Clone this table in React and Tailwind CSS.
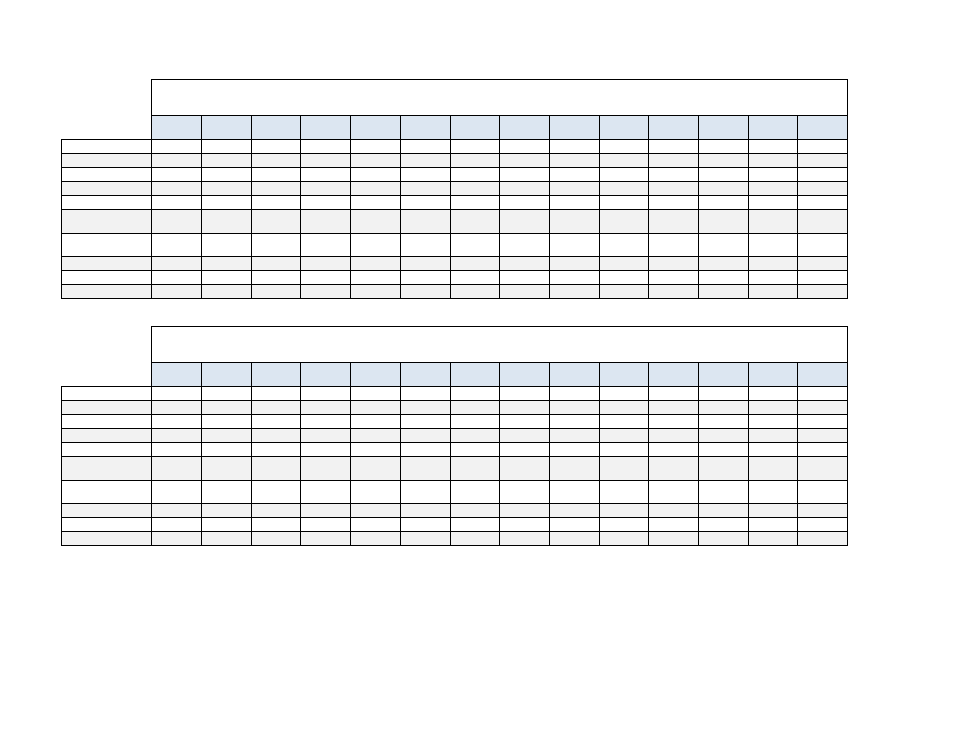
import React from 'react';

// column widths measured line-to-line, the last one also carries the right border
const colWidths = [50, 50, 49, 50, 50, 50, 49, 50, 50, 49, 50, 50, 49, 50];
const rowHeights = [14, 14, 14, 14, 14, 24, 23, 14, 14, 14];

const DataRow = ({ height, shaded, last }) => {
  const bg = shaded ? 'bg-[#f2f2f2]' : 'bg-white';
  return (
    <div className="flex flex-row">
      <div
        className={`w-[90px] shrink-0 border-l border-t border-black ${bg} ${last ? 'border-b' : ''}`}
        style={{ height: height + (last ? 1 : 0) }}
      />
      {colWidths.map((w, i) => (
        <div
          key={i}
          className={`shrink-0 border-l border-t border-black ${bg} ${last ? 'border-b' : ''} ${
            i === colWidths.length - 1 ? 'border-r' : ''
          }`}
          style={{
            width: w + (i === colWidths.length - 1 ? 1 : 0),
            height: height + (last ? 1 : 0),
          }}
        />
      ))}
    </div>
  );
};

const Sheet = () => {
  return (
    <div className="flex flex-col">
      <div className="flex flex-row">
        <div className="w-[90px] shrink-0" />
        <div className="w-[697px] h-[36px] shrink-0 border-l border-t border-r border-black bg-white" />
      </div>
      <div className="flex flex-row">
        <div className="w-[90px] shrink-0" />
        {colWidths.map((w, i) => (
          <div
            key={i}
            className={`h-[24px] shrink-0 border-l border-t border-black bg-[#dce6f1] ${
              i === colWidths.length - 1 ? 'border-r' : ''
            }`}
            style={{ width: w + (i === colWidths.length - 1 ? 1 : 0) }}
          />
        ))}
      </div>
      {rowHeights.map((h, i) => (
        <DataRow key={i} height={h} shaded={i % 2 === 1} last={i === rowHeights.length - 1} />
      ))}
    </div>
  );
};

export default function App() {
  return (
    <div className="w-[954px] h-[738px] bg-white pl-[61px] pt-[79px] flex flex-col gap-[27px] font-['Liberation_Sans',sans-serif]">
      <Sheet />
      <Sheet />
    </div>
  );
}
